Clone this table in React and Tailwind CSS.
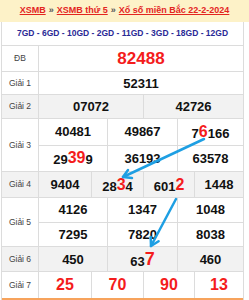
import React from 'react';

const font = { fontFamily: '"Liberation Sans", Arial, sans-serif' };

const Red = ({ children, size = 'text-[16px]' }) => (
  <span className={`text-[#f41c1c] ${size} leading-none`}>{children}</span>
);

const Cell = ({ w, last, children, className = '' }) => (
  <div
    className={`${w} h-full flex items-center justify-center ${last ? '' : 'border-r border-[#dcdcdc]'} ${className}`}
  >
    {children}
  </div>
);

const Label = ({ children }) => (
  <div className="w-[37px] shrink-0 h-full flex items-center justify-center border-r border-[#dcdcdc] text-[8.5px] text-[#444]">
    {children}
  </div>
);

const num = 'text-[13px] font-bold text-[#111] leading-none';

export default function App() {
  return (
    <div className="relative w-[249px] h-[300px] bg-white overflow-hidden" style={font}>
      {/* breadcrumb */}
      <div className="h-[22px] bg-[#fdf2c8] flex items-center justify-center text-[9px] font-bold text-[#e3251f] whitespace-nowrap">
        <span className="underline">XSMB</span>
        <span className="mx-[3px] text-[#555]">»</span>
        <span className="underline">XSMB thứ 5</span>
        <span className="mx-[3px] text-[#555]">»</span>
        <span className="underline">Xổ số miền Bắc 22-2-2024</span>
      </div>

      <div className="ml-[1px] w-[243px] border-x border-[#dcdcdc]">
        {/* codes */}
        <div className="h-[24px] border-b border-[#dcdcdc] flex items-center justify-center text-[8.5px] font-bold text-[#2a2a96] whitespace-nowrap">
          7GD - 6GD - 10GD - 2GD - 11GD - 3GD - 18GD - 12GD
        </div>

        {/* DB */}
        <div className="h-[26px] border-b border-[#dcdcdc] flex">
          <Label>ĐB</Label>
          <Cell w="w-[204px]" last>
            <span className="text-[17px] font-bold text-[#f41c1c] leading-none">82488</span>
          </Cell>
        </div>

        {/* G1 */}
        <div className="h-[23px] border-b border-[#dcdcdc] flex">
          <Label>Giải 1</Label>
          <Cell w="w-[204px]" last>
            <span className={num}>52311</span>
          </Cell>
        </div>

        {/* G2 */}
        <div className="h-[24px] border-b border-[#dcdcdc] flex bg-[#f2f2f2]">
          <Label>Giải 2</Label>
          <Cell w="w-[105px]"><span className={num}>07072</span></Cell>
          <Cell w="w-[99px]" last><span className={num}>42726</span></Cell>
        </div>

        {/* G3 */}
        <div className="h-[53px] border-b border-[#dcdcdc] flex">
          <Label>Giải 3</Label>
          <div className="w-[204px] flex flex-col">
            <div className="h-[27px] border-b border-[#dcdcdc] flex">
              <Cell w="w-[69px]"><span className={num}>40481</span></Cell>
              <Cell w="w-[70px]"><span className={num}>49867</span></Cell>
              <Cell w="w-[65px]" last>
                <span className={`${num} flex items-end`}>7<Red>6</Red>166</span>
              </Cell>
            </div>
            <div className="h-[26px] flex">
              <Cell w="w-[69px]">
                <span className={`${num} flex items-end`}>29<Red>39</Red>9</span>
              </Cell>
              <Cell w="w-[70px]"><span className={num}>36193</span></Cell>
              <Cell w="w-[65px]" last><span className={num}>63578</span></Cell>
            </div>
          </div>
        </div>

        {/* G4 */}
        <div className="h-[26px] border-b border-[#dcdcdc] flex bg-[#f2f2f2]">
          <Label>Giải 4</Label>
          <Cell w="w-[53px]"><span className={num}>9404</span></Cell>
          <Cell w="w-[52px]">
            <span className={`${num} flex items-end`}>28<Red>3</Red>4</span>
          </Cell>
          <Cell w="w-[51px]">
            <span className={`${num} flex items-end`}>601<Red>2</Red></span>
          </Cell>
          <Cell w="w-[48px]" last><span className={num}>1448</span></Cell>
        </div>

        {/* G5 */}
        <div className="h-[49px] border-b border-[#dcdcdc] flex">
          <Label>Giải 5</Label>
          <div className="w-[204px] flex flex-col">
            <div className="h-[25px] border-b border-[#dcdcdc] flex">
              <Cell w="w-[69px]"><span className={num}>4126</span></Cell>
              <Cell w="w-[70px]"><span className={num}>1347</span></Cell>
              <Cell w="w-[65px]" last><span className={num}>1048</span></Cell>
            </div>
            <div className="h-[24px] flex">
              <Cell w="w-[69px]"><span className={num}>7295</span></Cell>
              <Cell w="w-[70px]"><span className={num}>7820</span></Cell>
              <Cell w="w-[65px]" last><span className={num}>8038</span></Cell>
            </div>
          </div>
        </div>

        {/* G6 */}
        <div className="h-[25px] border-b border-[#dcdcdc] flex bg-[#f2f2f2]">
          <Label>Giải 6</Label>
          <Cell w="w-[69px]"><span className={num}>450</span></Cell>
          <Cell w="w-[70px]">
            <span className={`${num} flex items-end`}>63<Red size="text-[18px]">7</Red></span>
          </Cell>
          <Cell w="w-[65px]" last><span className={num}>460</span></Cell>
        </div>

        {/* G7 */}
        <div className="h-[28px] border-b-2 border-b-[#f7a35c] flex">
          <Label>Giải 7</Label>
          {[['25', 'w-[53px]'], ['70', 'w-[52px]'], ['90', 'w-[51px]'], ['13', 'w-[48px]']].map(([n, w], i) => (
            <Cell key={n} w={w} last={i === 3}>
              <span className="text-[16px] font-bold text-[#f41c1c] leading-none">{n}</span>
            </Cell>
          ))}
        </div>
      </div>

      {/* arrows */}
      <svg className="absolute left-0 top-0 pointer-events-none" width="249" height="300" viewBox="0 0 249 300">
        <g stroke="#1e9fe3" strokeWidth="2.5" strokeLinecap="round" fill="none">
          <line x1="204" y1="139" x2="123" y2="177" />
          <polyline points="132,178 123,177 128,170" strokeLinejoin="round" />
          <line x1="176" y1="199" x2="151" y2="246" />
          <polyline points="158.6,241.2 151,246 150.7,237" strokeLinejoin="round" />
        </g>
      </svg>
    </div>
  );
}
